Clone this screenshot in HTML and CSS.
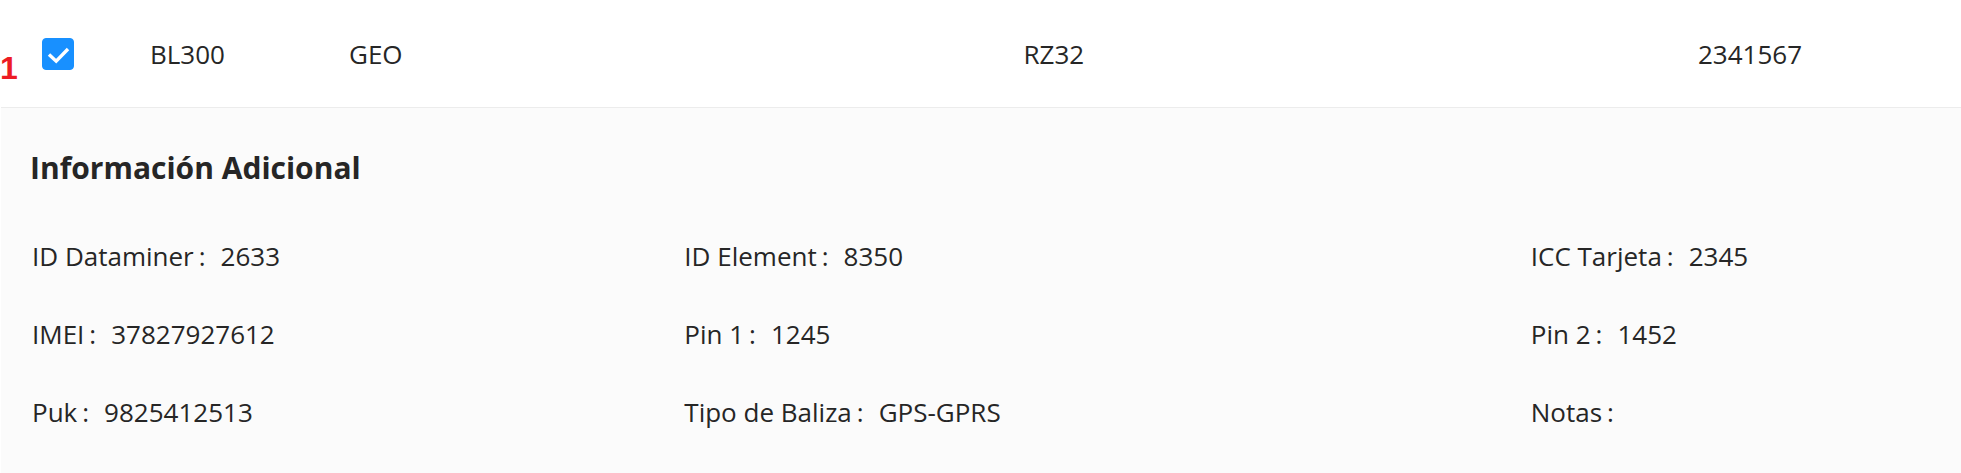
FILE: index.html
```html
<!DOCTYPE html>
<html lang="es">
<head>
<meta charset="utf-8">
<title>Balizas</title>
<link rel="stylesheet" href="styles.css">
</head>
<body>
<main class="page">
  <table class="beacons">
    <colgroup>
      <col class="col-select">
      <col class="col-code">
      <col>
      <col>
      <col class="col-number">
    </colgroup>
    <tbody>
      <tr class="row">
        <td class="cell cell-select"><input class="check" type="checkbox" aria-label="Seleccionar BL300" checked><svg class="tick" viewBox="0 0 32 32" aria-hidden="true"><path d="M7 16.5L14.2 23.2L26 11"/></svg></td>
        <td class="cell">BL300</td>
        <td class="cell">GEO</td>
        <td class="cell">RZ32</td>
        <td class="cell">2341567</td>
      </tr>
      <tr>
        <td class="details" colspan="5">
          <h2 class="title">Información Adicional</h2>
          <dl class="fields">
            <div class="field"><dt>ID Dataminer</dt><dd>2633</dd></div>
            <div class="field"><dt>ID Element</dt><dd>8350</dd></div>
            <div class="field"><dt>ICC Tarjeta</dt><dd>2345</dd></div>
            <div class="field"><dt>IMEI</dt><dd>37827927612</dd></div>
            <div class="field"><dt>Pin 1</dt><dd>1245</dd></div>
            <div class="field"><dt>Pin 2</dt><dd>1452</dd></div>
            <div class="field"><dt>Puk</dt><dd>9825412513</dd></div>
            <div class="field"><dt>Tipo de Baliza</dt><dd>GPS-GPRS</dd></div>
            <div class="field"><dt>Notas</dt><dd></dd></div>
          </dl>
        </td>
      </tr>
    </tbody>
  </table>
  <span class="marker">1</span>
</main>
</body>
</html>
```
FILE: styles.css
```css
body {
  margin: 0;
  background: #fff;
  color: #262626;
  font-family: "Open Sans", "Noto Sans", sans-serif;
  font-size: 26px;
  line-height: 38px;
}

.page {
  position: relative;
  padding-left: 1px;
}

.beacons {
  width: 100%;
  table-layout: fixed;
  border-collapse: separate;
  border-spacing: 0;
}

.col-select { width: 116px; }
.col-code { width: 199px; }
.col-number { width: 296px; }

.cell {
  padding: 35px 20px 34px 33px;
  border-bottom: 1px solid #ececec;
  vertical-align: middle;
}

.cell-select {
  padding: 0;
  position: relative;
}

.check {
  appearance: none;
  display: block;
  width: 32px;
  height: 32px;
  margin: 0 0 0 41px;
  border: 1px solid #1890ff;
  border-radius: 4px;
  background: #fff;
}

.check:checked { background: #1890ff; }

.tick {
  position: absolute;
  left: 41px;
  top: 50%;
  width: 32px;
  height: 32px;
  margin-top: -16px;
  fill: none;
  stroke: #fff;
  stroke-width: 3.4;
  pointer-events: none;
}

.check:not(:checked) + .tick { display: none; }

.details {
  padding: 36px 29px 43px;
  background: #fbfbfb;
}

.title {
  margin: 0 0 45px;
  font-size: 30px;
  line-height: 48px;
  font-weight: 700;
}

.fields {
  display: grid;
  grid-template-columns: 652fr 846fr 401fr;
  row-gap: 40px;
  margin: 0;
  padding-left: 2px;
}

.field { display: flex; }

.field dt::after {
  content: ":";
  margin: 0 15px 0 5px;
}

.field dd { margin: 0; }

.marker {
  position: absolute;
  left: 0;
  top: 49px;
  color: #ed1c24;
  font-family: "Liberation Sans", Arial, sans-serif;
  font-size: 32px;
  font-weight: 700;
}
```
